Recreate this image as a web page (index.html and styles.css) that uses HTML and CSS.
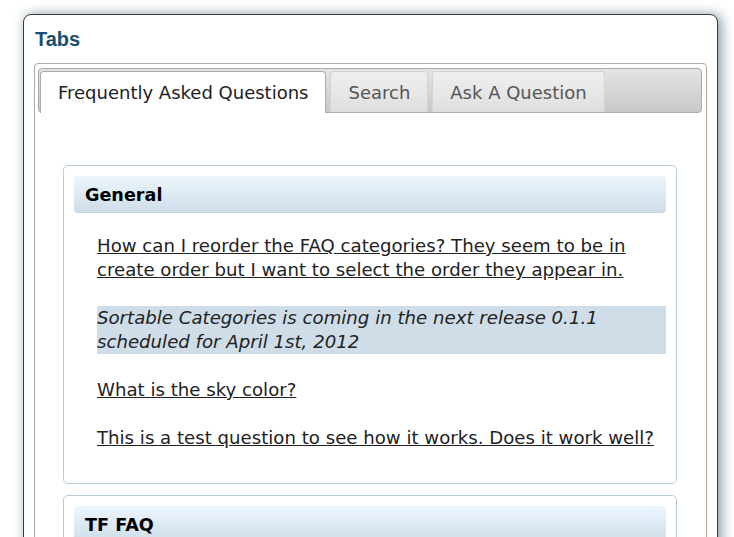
FILE: index.html
```html
<!DOCTYPE html>
<html>
<head>
<meta charset="utf-8">
<link rel="stylesheet" href="styles.css">
</head>
<body>
<div class="panel">
  <h2 class="title">Tabs</h2>
  <div class="tabs">
    <ul class="tab-nav">
      <li class="tab active">Frequently Asked Questions</li>
      <li class="tab">Search</li>
      <li class="tab">Ask A Question</li>
    </ul>
    <div class="tab-panel">
      <div class="faq-box">
        <div class="faq-head">General</div>
        <ul class="faq-list">
          <li class="q"><a href="#">How can I reorder the FAQ categories? They seem to be in create order but I want to select the order they appear in.</a></li>
          <li class="answer">Sortable Categories is coming in the next release 0.1.1 scheduled for April 1st, 2012</li>
          <li class="q"><a href="#">What is the sky color?</a></li>
          <li class="q"><a href="#">This is a test question to see how it works. Does it work well?</a></li>
        </ul>
      </div>
      <div class="faq-box">
        <div class="faq-head">TF FAQ</div>
        <ul class="faq-list">
          <li class="q"><a href="#">Placeholder question</a></li>
        </ul>
      </div>
    </div>
  </div>
</div>
</body>
</html>
```

FILE: styles.css
```css
html, body {
  margin: 0;
  padding: 0;
  background: #ffffff;
  height: 537px;
  overflow: hidden;
}
body {
  font-family: "DejaVu Sans", Verdana, sans-serif;
  color: #222;
  padding-top: 14px;
}
.panel {
  margin-left: 23px;
  width: 673px;
  height: 800px;
  border: 1px solid #3a3a3a;
  border-radius: 8px;
  background: #fff;
  padding: 13px 10px 0 10px;
  box-shadow: 3px 1px 12px 1px rgba(60, 100, 122, 0.6);
}
.title {
  margin: 0 0 13px 1px;
  font-family: "Liberation Sans", Arial, sans-serif;
  font-weight: bold;
  font-size: 20px;
  line-height: 22px;
  color: #1b4e6c;
}
.tabs {
  border: 1px solid #aaaaaa;
  border-radius: 4px;
  padding: 0;
}
.tab-nav {
  list-style: none;
  margin: 4px 4px 0 3px;
  padding: 2px 0 0 1px;
  height: 41px;
  display: flex;
  gap: 4px;
  border: 1px solid #aaaaaa;
  border-radius: 4px;
  background: linear-gradient(#e4e4e4, #c8c8c8);
}
.tab {
  height: 40px;
  padding: 0 17px 0 17px;
  font-size: 18px;
  line-height: 42px;
  color: #555;
  border: 1px solid #d3d3d3;
  border-bottom: none;
  border-radius: 4px 4px 0 0;
  background: linear-gradient(#efefef, #e4e4e4 70%, #dedede);
}
.tab.active {
  height: 41px;
  color: #212121;
  background: #fff;
  border-color: #aaaaaa;
  margin-bottom: -1px;
}
.tab-panel {
  padding: 52px 29px 0 28px;
}
.faq-box {
  border: 1px solid #b9ccda;
  border-radius: 5px;
  padding: 10px 10px 10px 10px;
  margin-bottom: 11px;
}
.faq-head {
  height: 36px;
  border-bottom: 1px solid #bfd1de;
  border-radius: 4px;
  padding-left: 11px;
  background: linear-gradient(#eef6fd, #cddde9);
  font-weight: bold;
  font-size: 17.6px;
  line-height: 38px;
  color: #000;
}
.faq-list {
  list-style: none;
  margin: 21px 0 23px 23px;
  padding: 0;
}
.faq-list li {
  font-size: 18.15px;
  line-height: 24px;
  margin-bottom: 24px;
}
.faq-list li:last-child {
  margin-bottom: 0;
}
.faq-list a {
  color: #222;
  text-decoration: underline;
}
.faq-list .answer {
  background: #cfdde8;
  font-style: italic;
}
```
